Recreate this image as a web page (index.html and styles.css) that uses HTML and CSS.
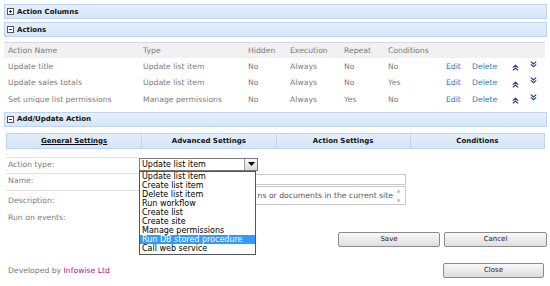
FILE: index.html
```html
<!DOCTYPE html>
<html lang="en">
<head>
  <meta charset="UTF-8">
  <title>Actions | Infowise</title>
  <link rel="stylesheet" href="styles.css">
</head>
<body>
  <div class="page">
    <div class="bar"><span class="toggle plus"></span>Action Columns</div>
    <div class="bar"><span class="toggle"></span>Actions</div>

    <table class="actions">
      <colgroup>
        <col style="width:135px"><col style="width:105px"><col style="width:42px">
        <col style="width:54px"><col style="width:44px"><col style="width:58px">
        <col style="width:26px"><col style="width:40px"><col style="width:18px"><col>
      </colgroup>
      <thead>
        <tr>
          <th>Action Name</th><th>Type</th><th>Hidden</th><th>Execution</th>
          <th>Repeat</th><th>Conditions</th><th></th><th></th><th></th><th></th>
        </tr>
      </thead>
      <tbody id="action-rows"></tbody>
    </table>

    <div class="bar"><span class="toggle"></span>Add/Update Action</div>

    <div class="tabs">
      <a class="tab active" href="#">General Settings</a>
      <a class="tab" href="#">Advanced Settings</a>
      <a class="tab" href="#">Action Settings</a>
      <a class="tab" href="#">Conditions</a>
    </div>

    <div class="form">
      <div class="row row-type">
        <label>Action type:</label>
        <div class="field">
          <div class="select">
            <span>Update list item</span>
            <span class="select-btn"><svg width="7" height="4" viewBox="0 0 7 4"><path d="M0 0h7L3.5 4z" fill="#000"/></svg></span>
          </div>
        </div>
      </div>
      <div class="row row-name">
        <label>Name:</label>
        <div class="field"><div class="input"></div></div>
      </div>
      <div class="row row-desc">
        <label>Description:</label>
        <div class="field">
          <div class="textarea">
            <!-- the start of the line sits under the open list -->
            <span class="textarea-text">ns or documents in the current site</span>
            <span class="scroll"><i>&#9650;</i><i>&#9660;</i></span>
          </div>
        </div>
      </div>
      <div class="row row-events">
        <label>Run on events:</label>
        <div class="field"></div>
      </div>

      <ul class="dropdown">
        <li>Update list item</li>
        <li>Create list item</li>
        <li>Delete list item</li>
        <li>Run workflow</li>
        <li>Create list</li>
        <li>Create site</li>
        <li>Manage permissions</li>
        <li class="selected">Run DB stored procedure</li>
        <li>Call web service</li>
      </ul>
    </div>

    <div class="buttons">
      <button class="btn btn-save">Save</button>
      <button class="btn btn-cancel">Cancel</button>
    </div>

    <div class="footer">
      <span>Developed by <a href="#">Infowise Ltd</a></span>
      <button class="btn btn-close">Close</button>
    </div>
  </div>

  <script>
    const rows = [
      { name: 'Update title', type: 'Update list item', hidden: 'No', exec: 'Always', repeat: 'No', cond: 'No' },
      { name: 'Update sales totals', type: 'Update list item', hidden: 'No', exec: 'Always', repeat: 'No', cond: 'Yes' },
      { name: 'Set unique list permissions', type: 'Manage permissions', hidden: 'No', exec: 'Always', repeat: 'Yes', cond: 'No' }
    ];

    const up = '<svg width="7" height="7" viewBox="0 0 7 7"><path d="M0.8 3.6L3.5 1.2L6.2 3.6M0.8 6.4L3.5 4L6.2 6.4" fill="none" stroke="#1d3f8c" stroke-width="1.2"/></svg>';
    const down = '<svg width="7" height="7" viewBox="0 0 7 7"><path d="M0.8 0.6L3.5 3L6.2 0.6M0.8 3.4L3.5 5.8L6.2 3.4" fill="none" stroke="#1d3f8c" stroke-width="1.2"/></svg>';

    const body = document.getElementById('action-rows');
    rows.forEach(r => {
      body.innerHTML += `
        <tr>
          <td>${r.name}</td><td>${r.type}</td><td>${r.hidden}</td><td>${r.exec}</td>
          <td>${r.repeat}</td><td>${r.cond}</td>
          <td><a href="#">Edit</a></td><td><a href="#">Delete</a></td>
          <td class="arrow up">${up}</td><td class="arrow down">${down}</td>
        </tr>`;
    });
  </script>
</body>
</html>
```

FILE: styles.css
```css
body {
  margin: 0;
  font-family: "DejaVu Sans", Verdana, sans-serif;
  font-size: 7.7px;
  color: #7b7b7b;
  background-color: #fff;
}

.page {
  padding: 4px 3px 0 4px;
}

a {
  color: #2f78c4;
  text-decoration: none;
}

/* collapsible section headers */
.bar {
  display: flex;
  align-items: center;
  gap: 3px;
  height: 13px;
  margin-bottom: 3px;
  padding-left: 2px;
  background: linear-gradient(to bottom, #e6effc, #d6e5fa);
  border: 1px solid #bcd4f5;
  color: #111;
  font-weight: bold;
  font-size: 7px;
}

.toggle {
  position: relative;
  width: 5px;
  height: 5px;
  border: 1px solid #555;
  background-color: #fff;
}

.toggle::before {
  content: "";
  position: absolute;
  left: 1px;
  top: 2px;
  width: 3px;
  height: 1px;
  background-color: #333;
}

.toggle.plus::after {
  content: "";
  position: absolute;
  left: 2px;
  top: 1px;
  width: 1px;
  height: 3px;
  background-color: #333;
}

/* actions list */
.actions {
  width: 541px;
  margin-top: 5px;
  margin-bottom: 4px;
  border-collapse: collapse;
  table-layout: fixed;
}

.actions th {
  height: 15px;
  padding: 0 0 0 4px;
  text-align: left;
  font-weight: normal;
  color: #7b7b7b;
  background-color: #f1f1f1;
  border-top: 1px solid #d8d8d8;
}

.actions td {
  height: 16.5px;
  padding: 0 0 0 4px;
  white-space: nowrap;
}

.actions td.arrow {
  padding: 0;
  line-height: 0;
}

.actions td.up svg {
  margin: 3px 0 0 4px;
}

.actions td.down svg {
  margin: -4px 0 0 4px;
}

/* tabs */
.tabs {
  display: grid;
  grid-template-columns: repeat(4, 1fr);
  margin: 6px 2px 0 2px;
  background: linear-gradient(to bottom, #e4eefc, #d5e4fa);
  border: 1px solid #bcd4f5;
}

.tab {
  height: 14px;
  line-height: 14px;
  text-align: center;
  font-weight: bold;
  font-size: 7px;
  color: #111;
  border-left: 1px solid #bcd4f5;
}

.tab:first-child {
  border-left: none;
}

.tab.active {
  text-decoration: underline;
}

/* form */
.form {
  position: relative;
  margin: 8px 0 0 2px;
}

.row {
  display: grid;
  grid-template-columns: 133px 1fr;
}

.row label {
  padding-left: 2px;
  border-top: 1px solid #e2e2e2;
}

.row-type {
  height: 16px;
}

.row-type label {
  line-height: 13px;
}

.row-name {
  height: 17px;
}

.row-name label {
  line-height: 14px;
}

.row-desc {
  height: 19px;
}

.row-desc label {
  line-height: 19px;
}

.row-events {
  height: 18px;
}

.row-events label {
  line-height: 18px;
  border-top: none;
}

.select {
  display: flex;
  justify-content: space-between;
  width: 115px;
  height: 11px;
  margin-top: 1px;
  border: 1px solid #7a7a7a;
  color: #000;
  font-size: 8px;
  line-height: 11px;
  padding-left: 2px;
  box-sizing: content-box;
}

.select-btn {
  display: flex;
  align-items: center;
  justify-content: center;
  width: 12px;
  height: 11px;
  background: linear-gradient(to bottom, #f7f7f7, #dcdcdc);
  border-left: 1px solid #9a9a9a;
}

.input {
  width: 265px;
  height: 9px;
  margin-top: 1px;
  border: 1px solid #c8c8c8;
}

.textarea {
  display: flex;
  width: 265px;
  height: 17px;
  margin-top: -4px;
  border: 1px solid #c8c8c8;
  color: #555;
}

.textarea-text {
  flex: 1;
  padding: 4px 4px 0 0;
  text-align: right;
  white-space: nowrap;
  overflow: hidden;
}

.scroll {
  display: flex;
  flex-direction: column;
  justify-content: space-between;
  width: 8px;
  padding: 1px 0;
  font-size: 4px;
  color: #aaa;
}

.scroll i {
  font-style: normal;
}

.dropdown {
  position: absolute;
  top: 14px;
  left: 133px;
  width: 115px;
  margin: 0;
  padding: 0 0 1px 0;
  list-style: none;
  background-color: #fff;
  border: 1px solid #555;
  color: #000;
  font-size: 8px;
}

.dropdown li {
  height: 9px;
  line-height: 9px;
  padding-left: 2px;
}

.dropdown li.selected {
  background-color: #3399ff;
  color: #fff;
}

/* buttons */
.buttons {
  display: flex;
  justify-content: flex-end;
  gap: 4px;
  margin-top: 5px;
}

.btn {
  height: 15px;
  padding: 0;
  font-family: "DejaVu Sans", Verdana, sans-serif;
  font-size: 7px;
  color: #222;
  background: linear-gradient(to bottom, #f8f8f8, #dedede);
  border: 1px solid #8c8c8c;
  border-radius: 2px;
}

.btn-save {
  width: 102px;
}

.btn-cancel {
  width: 103px;
}

.footer {
  display: flex;
  justify-content: space-between;
  align-items: center;
  margin-top: 16px;
  padding: 0 3px 0 4px;
}

.footer a {
  color: #c3158a;
}

.btn-close {
  width: 101px;
}
```
